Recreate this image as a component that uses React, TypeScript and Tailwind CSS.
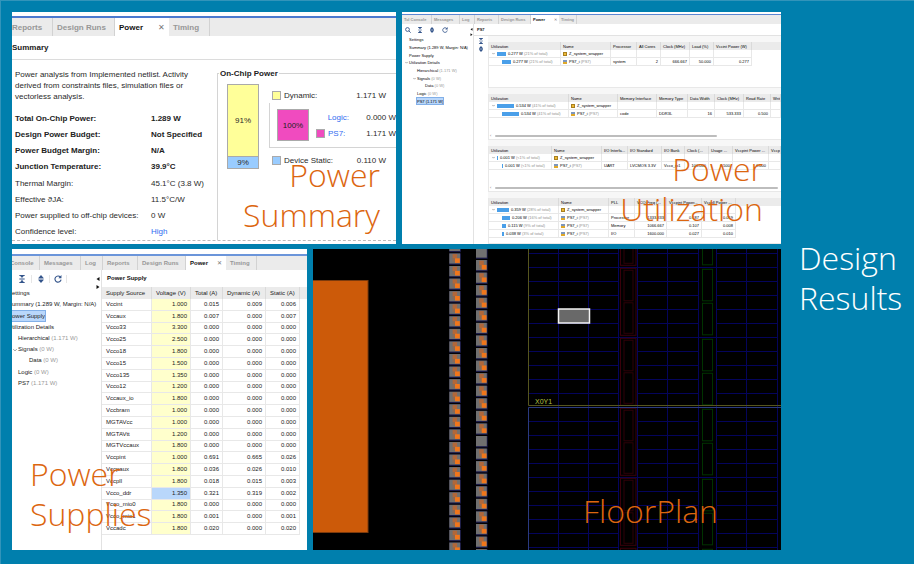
import React from "react";

const heading =
  "pointer-events-none font-['Open_Sans','Noto_Sans',sans-serif] text-[32px] leading-10 font-light text-[#dc660f]";

type IconProps = { className: string };

function CollapseIcon({ className }: IconProps) {
  return (
    <svg viewBox="0 0 12 12" className={className} fill="#34558b" aria-hidden="true">
      <path d="M2 0h8v1.6H2zM2 10.4h8V12H2zM2 5.3h8v1.4H2zM3.4 1.6h5.2L6 4.6zM6 7.2l2.6 3.2H3.4z" />
    </svg>
  );
}

function ExpandIcon({ className }: IconProps) {
  return (
    <svg viewBox="0 0 12 12" className={className} fill="#34558b" aria-hidden="true">
      <path d="M6 0l4 4.6H2zM6 12L2 7.4h8zM2 5.1h8v1.8H2z" />
    </svg>
  );
}

function RefreshIcon({ className }: IconProps) {
  return (
    <svg viewBox="0 0 12 12" className={className} aria-hidden="true">
      <path d="M9.6 3.2A4.6 4.6 0 1 0 10.6 7" fill="none" stroke="#34558b" strokeWidth="1.7" />
      <path d="M11.2 0v4.8H6.6z" fill="#34558b" />
    </svg>
  );
}

function SearchIcon({ className }: IconProps) {
  return (
    <svg viewBox="0 0 12 12" className={className} fill="none" stroke="#34558b" strokeWidth="1.8" aria-hidden="true">
      <circle cx="5" cy="5" r="3.8" />
      <path d="M7.8 7.8l3.6 3.6" />
    </svg>
  );
}

function Chevron({ className }: IconProps) {
  return (
    <svg viewBox="0 0 6 6" className={className} fill="none" stroke="#777" strokeWidth="1.2" aria-hidden="true">
      <path d="M.5 1.8L3 4.3l2.500-2.500" />
    </svg>
  );
}

function SplitterArrows({ className }: IconProps) {
  return (
    <svg viewBox="0 0 4 12" className={className} aria-hidden="true">
      <path d="M3.500 0v4L.5 2zM.5 8v4l3-2z" fill="#111" />
    </svg>
  );
}

type TabItem = { label: string; width: string; active?: boolean };

function TabBar({ tabs, pad }: { tabs: TabItem[]; pad: string }) {
  return (
    <div role="tablist" className="flex h-full overflow-hidden bg-[#ebebeb] font-bold text-[#979797]">
      {tabs.map((t) =>
        t.active ? (
          <div key={t.label} className={`flex shrink-0 items-center justify-between bg-white text-[#111] ${pad} ${t.width}`}>
            <button role="tab" aria-selected="true">{t.label}</button>
            <button aria-label="Close Power" className="font-normal text-[#777]">✕</button>
          </div>
        ) : (
          <button
            key={t.label}
            role="tab"
            aria-selected="false"
            className={`shrink-0 overflow-hidden border-r border-[#d2d2d2] text-left whitespace-nowrap ${pad} ${t.width}`}
          >
            {t.label}
          </button>
        ),
      )}
    </div>
  );
}

/* ---------------------------- Power summary ---------------------------- */

const summaryTabs: TabItem[] = [
  { label: "Reports", width: "w-[45px] -ml-1" },
  { label: "Design Runs", width: "w-[62px]" },
  { label: "Power", width: "w-[54px]", active: true },
  { label: "Timing", width: "w-[41px]" },
];

const summaryRows = [
  { label: "Total On-Chip Power:", value: "1.289 W", bold: true },
  { label: "Design Power Budget:", value: "Not Specified", bold: true },
  { label: "Power Budget Margin:", value: "N/A", bold: true },
  { label: "Junction Temperature:", value: "39.9°C", bold: true },
  { label: "Thermal Margin:", value: "45.1°C (3.8 W)" },
  { label: "Effective ϑJA:", value: "11.5°C/W" },
  { label: "Power supplied to off-chip devices:", value: "0 W" },
  { label: "Confidence level:", value: "High", link: true },
];

function PowerSummary() {
  return (
    <section className="relative flex min-w-0 flex-col overflow-hidden bg-white text-[8px] leading-[11px] text-[#2a2a2a]">
      <div className="mt-1 h-[2px] shrink-0 bg-[#4b79cf]" />
      <div className="h-[18px] shrink-0">
        <TabBar tabs={summaryTabs} pad="px-1" />
      </div>
      <h2 className="flex h-6 shrink-0 items-center border-b border-[#dcdcdc] font-bold text-[#222]">Summary</h2>
      <div className="mb-[3px] flex min-h-0 flex-1 border-b border-dashed border-[#bbb]">
        <div className="flex w-[205px] shrink-0 flex-col pt-[9px] pl-[3px]">
          <p className="w-[196px] whitespace-nowrap">
            Power analysis from Implemented netlist. Activity
            <br />
            derived from constraints files, simulation files or
            <br />
            vectorless analysis.
          </p>
          <dl className="mt-2 grid flex-1 auto-rows-fr">
            {summaryRows.map((r) => (
              <div key={r.label} className={`flex items-center whitespace-nowrap ${r.bold ? "font-bold text-[#222]" : ""}`}>
                <dt className="w-[136px] shrink-0">{r.label}</dt>
                <dd>{r.link ? <a href="#confidence" className="text-[#2f6bf0]">{r.value}</a> : r.value}</dd>
              </div>
            ))}
          </dl>
        </div>
        <fieldset className="mt-2 min-w-0 flex-1 border-t border-l border-[#d4d4d4] pl-[9px]">
          <legend className="-ml-[8px] px-px font-bold text-[#222]">On-Chip Power</legend>
          <div className="mt-[5px] flex">
            <div className="flex h-[85px] w-8 shrink-0 flex-col border border-[#aaa] text-center">
              <div className="flex flex-1 items-center justify-center bg-[#ffff99]">91%</div>
              <div className="border-t border-[#aaa] bg-[#99ccff]">9%</div>
            </div>
            <div className="ml-[10px] min-w-0 flex-1">
              <div className="mt-[5px] flex h-3 items-center pl-[3px]">
                <span className="mr-[3px] size-[9px] border border-[#aaa] bg-[#ffff99]" />
                <span>Dynamic:</span>
                <span className="mr-[10px] ml-auto">1.171 W</span>
              </div>
              <div className="mt-[2px] flex h-[45px] border-b border-l border-[#d4d4d4] pt-[6px] pl-[7px]">
                <div className="flex size-8 shrink-0 items-center justify-center border border-[#aaa] bg-[#f04bbf] text-[#222]">
                  100%
                </div>
                <div className="flex-1">
                  <div className="flex h-4 items-center">
                    <a href="#logic" className="w-10 text-right text-[#2f6bf0]">Logic:</a>
                    <span className="ml-auto">0.000 W</span>
                  </div>
                  <div className="flex h-4 items-center">
                    <span className="ml-[7px] size-[9px] border border-[#aaa] bg-[#f04bbf]" />
                    <a href="#ps7" className="ml-[3px] text-[#2f6bf0]">PS7:</a>
                    <span className="ml-auto">1.171 W</span>
                  </div>
                </div>
              </div>
              <div className="mt-[6px] flex h-3 items-center pl-[3px]">
                <span className="mr-[3px] size-[9px] border border-[#aaa] bg-[#99ccff]" />
                <span>Device Static:</span>
                <span className="mr-[10px] ml-auto">0.110 W</span>
              </div>
            </div>
          </div>
        </fieldset>
      </div>
      <h1 className={`absolute right-4 bottom-[9px] text-right ${heading}`}>
        Power
        <br />
        Summary
      </h1>
    </section>
  );
}

/* -------------------------- Navigation tree --------------------------- */

type TreeItem = { label: string; note?: string; level: number; open?: boolean };

const treeItems: TreeItem[] = [
  { label: "Settings", level: 0 },
  { label: "Summary (1.289 W, Margin: N/A)", level: 0 },
  { label: "Power Supply", level: 0 },
  { label: "Utilization Details", level: 0, open: true },
  { label: "Hierarchical", note: "(1.171 W)", level: 1 },
  { label: "Signals", note: "(0 W)", level: 1, open: true },
  { label: "Data", note: "(0 W)", level: 2 },
  { label: "Logic", note: "(0 W)", level: 1 },
  { label: "PS7", note: "(1.171 W)", level: 1 },
];

function Tree({ selected, indents, chevron }: { selected: string; indents: string[]; chevron: string }) {
  return (
    <ul className="grid h-full auto-rows-fr">
      {treeItems.map((item) => (
        <li key={item.label} className={`flex items-center whitespace-nowrap ${indents[item.level]}`}>
          <span className="flex w-0 justify-end">{item.open && <Chevron className={chevron} />}</span>
          <button
            className={
              item.label === selected
                ? "h-full bg-[#b9d7fb] px-px outline-1 -outline-offset-1 outline-[#82b0e8]"
                : "h-full px-px"
            }
          >
            {item.label} {item.note && <span className={item.label === selected ? "" : "text-[#999]"}>{item.note}</span>}
          </button>
        </li>
      ))}
    </ul>
  );
}

/* -------------------------- Power utilization -------------------------- */

const utilizationTabs: TabItem[] = [
  { label: "Tcl Console", width: "w-[30px]" },
  { label: "Messages", width: "w-[28px]" },
  { label: "Log", width: "w-[15px]" },
  { label: "Reports", width: "w-6" },
  { label: "Design Runs", width: "w-8" },
  { label: "Power", width: "w-7", active: true },
  { label: "Timing", width: "w-[18px]" },
];

type UsageRow = { bar: string; watts: string; share: string; name: string; note?: string; cells: string[] };
type UsageTableData = { id: string; widths: string[]; heads: string[]; rows: UsageRow[]; scroll?: string };

const usageTables: UsageTableData[] = [
  {
    id: "Processor",
    widths: ["w-[72px]", "w-[50px]", "w-[26px]", "w-6", "w-[29px]", "w-6", "w-[38px]"],
    heads: ["Processor", "All Cores", "Clock (MHz)", "Load (%)", "Vccint Power (W)"],
    rows: [
      { bar: "w-[9px]", watts: "0.277 W", share: "(21% of total)", name: "Z_system_wrapper", cells: ["", "", "", "", ""] },
      { bar: "w-[9px]", watts: "0.277 W", share: "(21% of total)", name: "PS7_i", note: "(PS7)", cells: ["system", "2", "666.667", "50.000", "0.277"] },
    ],
  },
  {
    id: "Memory",
    widths: ["w-20", "w-[49px]", "w-[39px]", "w-[31px]", "w-[27px]", "w-[29px]", "w-[27px]"],
    heads: ["Memory Interface", "Memory Type", "Data Width", "Clock (MHz)", "Read Rate", "Write Rate"],
    rows: [
      { bar: "w-[17px]", watts: "0.534 W", share: "(41% of total)", name: "Z_system_wrapper", cells: ["", "", "", "", "", ""] },
      { bar: "w-[17px]", watts: "0.534 W", share: "(41% of total)", name: "PS7_i", note: "(PS7)", cells: ["code", "DDR3L", "16", "533.333", "0.500", ""] },
    ],
    scroll: "mr-[64px]",
  },
  {
    id: "I/O",
    widths: ["w-[63px]", "w-[50px]", "w-[26px]", "w-[34px]", "w-[23px]", "w-6", "w-6", "w-9"],
    heads: ["I/O Interfa...", "I/O Standard", "I/O Bank", "Clock (...", "Usage ...", "Vccpint Power ...", "Vccpaux"],
    rows: [
      { bar: "w-px", watts: "0.001 W", share: "(<1% of total)", name: "Z_system_wrapper", cells: ["", "", "", "", "", "", ""] },
      { bar: "w-px", watts: "0.001 W", share: "(<1% of total)", name: "PS7_i", note: "(PS7)", cells: ["UART", "LVCMOS 3.3V", "Vcco_io1", "100.000", "0.500", "0.000", ""] },
    ],
    scroll: "mr-[3px]",
  },
  {
    id: "PLL",
    widths: ["w-[70px]", "w-[50px]", "w-[26px]", "w-8", "w-[35px]", "w-[34px]"],
    heads: ["PLL", "VCO Freq (...", "Vccpint Power...", "Vccpll Power ..."],
    rows: [
      { bar: "w-3", watts: "0.359 W", share: "(28% of total)", name: "Z_system_wrapper", cells: ["", "", "", ""] },
      { bar: "w-2", watts: "0.206 W", share: "(16% of total)", name: "PS7_i", note: "(PS7)", cells: ["Processor", "1333.333", "0.187", "0.019"] },
      { bar: "w-1", watts: "0.115 W", share: "(9% of total)", name: "PS7_i", note: "(PS7)", cells: ["Memory", "1066.667", "0.107", "0.008"] },
      { bar: "w-[2px]", watts: "0.038 W", share: "(3% of total)", name: "PS7_i", note: "(PS7)", cells: ["I/O", "1600.000", "0.027", "0.010"] },
    ],
  },
];

function UsageTable({ table }: { table: UsageTableData }) {
  const cell = "h-2 overflow-hidden border-r border-b border-[#e8e8e8] px-[2px] whitespace-nowrap";
  return (
    <div className="flex h-[46px] shrink-0 flex-col overflow-hidden border-b border-l border-[#e8e8e8] bg-white">
      <table aria-label={table.id} className="w-full table-fixed border-separate border-spacing-0">
        <colgroup>
          {table.widths.map((w, i) => (
            <col key={i} className={w} />
          ))}
          <col />
        </colgroup>
        <thead>
          <tr>
            {["Utilization", "Name", ...table.heads].map((h) => (
              <th key={h} scope="col" className="h-2 overflow-hidden border-r border-[#dadada] bg-[#ebebeb] px-[2px] text-left font-normal whitespace-nowrap">
                {h}
              </th>
            ))}
            {table.widths.length === table.heads.length + 2 && <td className="bg-[#ebebeb]" />}
          </tr>
        </thead>
        <tbody>
          {table.rows.map((r, i) => (
            <tr key={i}>
              <td className={cell}>
                <span className="flex items-center">
                  {i === 0 ? <Chevron className="mx-px mr-[2px] size-[3px] shrink-0" /> : <span className="w-[11px] shrink-0" />}
                  <span className={`mr-[2px] h-1 shrink-0 bg-[#4a9fe9] ${r.bar}`} />
                  {r.watts}
                  <span className="ml-px text-[#8f8f8f]">{r.share}</span>
                </span>
              </td>
              <td className={cell}>
                <span className="flex items-center">
                  <span
                    className={
                      r.note
                        ? "mr-[2px] size-1 shrink-0 border-b-2 border-[#e0a92a] bg-[#7d97bd]"
                        : "mr-[2px] size-1 shrink-0 border border-[#a87f1f] bg-[#f0bb35]"
                    }
                  />
                  {r.name}
                  <span className="ml-px text-[#8f8f8f]">{r.note}</span>
                </span>
              </td>
              {r.cells.map((c, j) => (
                <td key={j} className={`${cell} ${/^[\d.]+$/.test(c) ? "text-right" : ""}`}>
                  {c}
                </td>
              ))}
            </tr>
          ))}
        </tbody>
      </table>
      {table.scroll && (
        <div className="mt-auto flex items-center">
          <span className="w-[6px] pl-px text-[#777]">‹</span>
          <span className={`h-[2px] flex-1 rounded-full bg-[#bdbdbd] ${table.scroll}`} />
        </div>
      )}
    </div>
  );
}

function PowerUtilization() {
  return (
    <section className="relative flex min-w-0 flex-col overflow-hidden bg-white text-[4px] leading-[7px] text-black">
      <div className="mt-[2px] h-px shrink-0 bg-[#5b86d2]" />
      <div className="h-[9px] shrink-0">
        <TabBar tabs={utilizationTabs} pad="px-[2px]" />
      </div>
      <div className="flex min-h-0 flex-1">
        <div className="flex w-[72px] shrink-0 flex-col border-r border-[#e2e2e2]">
          <div className="flex h-3 shrink-0 items-center justify-between pl-[3px]">
            <button aria-label="Search"><SearchIcon className="size-[6px]" /></button>
            <button aria-label="Collapse all"><CollapseIcon className="size-[6px]" /></button>
            <button aria-label="Expand all"><ExpandIcon className="size-[6px]" /></button>
            <button aria-label="Refresh"><RefreshIcon className="size-[6px]" /></button>
            <span className="w-[10px]" />
            <SplitterArrows className="mt-1 h-2 w-[3px]" />
          </div>
          <div className="h-[69px] shrink-0">
            <Tree selected="PS7" indents={["pl-[6px]", "pl-[14px]", "pl-[22px]"]} chevron="size-[3px] shrink-0" />
          </div>
        </div>
        <div className="flex min-w-0 flex-1 flex-col">
          <h2 className="flex h-3 shrink-0 items-center border-b border-[#e2e2e2] pl-[3px] font-bold text-[#111]">PS7</h2>
          <div className="flex min-h-0 flex-1">
            <div className="flex w-[14px] shrink-0 flex-col items-center gap-[2px] pt-[2px]">
              <button aria-label="Collapse rows"><CollapseIcon className="size-[6px]" /></button>
              <button aria-label="Expand rows"><ExpandIcon className="size-[6px]" /></button>
            </div>
            <div className="flex min-w-0 flex-1 flex-col gap-[6px] bg-[#f7f7f7] pt-[6px]">
              {usageTables.map((t) => (
                <UsageTable key={t.id} table={t} />
              ))}
            </div>
          </div>
        </div>
      </div>
      <h1 className={`absolute right-[18px] bottom-[15px] text-right ${heading}`}>
        Power
        <br />
        Utilization
      </h1>
    </section>
  );
}

/* --------------------------- Power supplies ---------------------------- */

const supplyTabs: TabItem[] = [
  { label: "Tcl Console", width: "w-[44px] -ml-4" },
  { label: "Messages", width: "w-[41px]" },
  { label: "Log", width: "w-[22px]" },
  { label: "Reports", width: "w-[35px]" },
  { label: "Design Runs", width: "w-12" },
  { label: "Power", width: "w-10", active: true },
  { label: "Timing", width: "w-[31px]" },
];

const supplies: [string, string, string, string, string][] = [
  ["Vccint", "1.000", "0.015", "0.009", "0.006"],
  ["Vccaux", "1.800", "0.007", "0.000", "0.007"],
  ["Vcco33", "3.300", "0.000", "0.000", "0.000"],
  ["Vcco25", "2.500", "0.000", "0.000", "0.000"],
  ["Vcco18", "1.800", "0.000", "0.000", "0.000"],
  ["Vcco15", "1.500", "0.000", "0.000", "0.000"],
  ["Vcco135", "1.350", "0.000", "0.000", "0.000"],
  ["Vcco12", "1.200", "0.000", "0.000", "0.000"],
  ["Vccaux_io", "1.800", "0.000", "0.000", "0.000"],
  ["Vccbram", "1.000", "0.000", "0.000", "0.000"],
  ["MGTAVcc", "1.000", "0.000", "0.000", "0.000"],
  ["MGTAVtt", "1.200", "0.000", "0.000", "0.000"],
  ["MGTVccaux", "1.800", "0.000", "0.000", "0.000"],
  ["Vccpint", "1.000", "0.691", "0.665", "0.026"],
  ["Vccpaux", "1.800", "0.036", "0.026", "0.010"],
  ["Vccpll", "1.800", "0.018", "0.015", "0.003"],
  ["Vcco_ddr", "1.350", "0.321", "0.319", "0.002"],
  ["Vcco_mio0", "1.800", "0.000", "0.000", "0.000"],
  ["Vcco_mio1", "1.800", "0.001", "0.000", "0.001"],
  ["Vccadc", "1.800", "0.020", "0.000", "0.020"],
];

function PowerSupplies() {
  return (
    <section className="relative flex min-w-0 flex-col overflow-hidden bg-white text-[6px] leading-[9px] text-[#222]">
      <div className="mt-[5px] h-[2px] shrink-0 bg-[#6b95da]" />
      <div className="h-[14px] shrink-0">
        <TabBar tabs={supplyTabs} pad="px-1" />
      </div>
      <div className="flex min-h-0 flex-1">
        <div className="w-[90px] shrink-0 border-r border-[#e2e2e2]">
          <div className="flex h-[17px] items-center">
            <button aria-label="Collapse all" className="flex w-5 justify-center border-r border-[#e6e6e6]"><CollapseIcon className="size-2" /></button>
            <button aria-label="Expand all" className="flex w-[18px] justify-center border-r border-[#e6e6e6]"><ExpandIcon className="size-2" /></button>
            <button aria-label="Refresh" className="flex w-[17px] justify-center border-r border-[#e6e6e6]"><RefreshIcon className="size-2" /></button>
            <SplitterArrows className="mt-2 mr-px ml-auto h-3 w-1" />
          </div>
          <div className="-ml-[5px] h-[102px] pt-px">
            <Tree selected="Power Supply" indents={["", "pl-[10px]", "pl-[21px]"]} chevron="size-1 shrink-0" />
          </div>
        </div>
        <div className="min-w-0 flex-1">
          <h2 className="flex h-[17px] items-center pl-[5px] font-bold text-[#111]">Power Supply</h2>
          <table className="h-[248px] w-full table-fixed border-separate border-spacing-0">
            <colgroup>
              <col className="w-[50px]" />
              <col className="w-[39px]" />
              <col className="w-8" />
              <col className="w-[43px]" />
              <col className="w-[34px]" />
              <col />
            </colgroup>
            <thead>
              <tr>
                {["Supply Source", "Voltage (V)", "Total (A)", "Dynamic (A)", "Static (A)"].map((h) => (
                  <th key={h} scope="col" className="h-3 border-r border-[#dadada] bg-[#ebebeb] pl-1 text-left font-normal whitespace-nowrap">
                    {h}
                  </th>
                ))}
                <td className="bg-[#ebebeb]" />
              </tr>
            </thead>
            <tbody>
              {supplies.map(([name, ...values]) => (
                <tr key={name}>
                  <th scope="row" className="border-r border-b border-[#e8e8e8] pl-1 text-left font-normal">{name}</th>
                  {values.map((v, i) => (
                    <td
                      key={i}
                      className={`border-r border-b border-[#e8e8e8] pr-[3px] text-right ${
                        i === 0 ? (name === "Vcco_ddr" ? "bg-[#b9d7fb]" : "bg-[#ffffcc]") : ""
                      }`}
                    >
                      {v}
                    </td>
                  ))}
                </tr>
              ))}
            </tbody>
          </table>
        </div>
      </div>
      <h1 className={`absolute bottom-4 left-[18px] ${heading}`}>
        Power
        <br />
        Supplies
      </h1>
    </section>
  );
}

/* ------------------------------ Floorplan ------------------------------ */

const tiles = Array.from({ length: 25 }, (_, i) => i - 1);
const gridRows = [4, 18, 32, 46, 60, 74, 88, 102, 116, 130, 144, 172, 186, 200, 214, 228, 242, 256, 270, 284, 298];
const blockTops = [-50.7, 19.3, 89.3, 159.3, 229.3, 299.3];

function Tile({ x, y, empty }: { x: number; y: number; empty?: boolean }) {
  return (
    <g>
      <rect x={x} y={y} width="11.600" height="11.400" fill="#19194a" />
      <rect x={x} y={y} width="10.800" height="10.200" fill="#707070" />
      {!empty && (
        <>
          <rect x={x + 3.3} y={y + 0.7} width="4.500" height="4.500" fill="#b0673a" />
          <rect x={x + 3.3} y={y + 5.2} width="2.500" height="3" fill="#8a6a55" />
          <rect x={x + 5.7} y={y + 4.9} width="4.800" height="4.600" fill="#f1761b" />
        </>
      )}
    </g>
  );
}

function FloorPlan() {
  return (
    <section className="relative min-w-0 overflow-hidden bg-black">
      <svg viewBox="0 0 468 301" preserveAspectRatio="xMinYMin slice" className="absolute size-full" role="img" aria-label="Device floorplan">
        <rect x="-2" y="31.500" width="57" height="252" fill="#cc5a09" stroke="#7c3a0c" />
        {tiles.map((i) => (
          <React.Fragment key={i}>
            <Tile x={136.3} y={4.4 + 12.57 * i} empty={i === -1} />
            <Tile x={163} y={11 + 12.57 * i} empty={i === -1 || i === 14} />
          </React.Fragment>
        ))}
        <g stroke="#04045c" strokeWidth="1">
          {gridRows.map((y) => (
            <path key={y} d={`M216 ${y + 0.5}H306M324.500 ${y + 0.5}H386M404 ${y + 0.5}H465`} />
          ))}
          {[18.5, 88.5, 228.5].map((y) => (
            <path key={y} d={`M306 ${y}H324M386 ${y}H404`} />
          ))}
          {[245.5, 275.5, 305.5, 324.5, 354.5, 385.5, 403.5, 433.5, 464.5].map((x) => (
            <path key={x} d={`M${x} 0V301`} />
          ))}
        </g>
        <g fill="none" stroke="#2e0008" strokeWidth="1">
          {blockTops.map((y) => (
            <React.Fragment key={y}>
              <rect x="307.500" y={y} width="15.500" height="67" stroke="#3a000a" />
              <rect x="311" y={y + 2} width="9" height="30.500" />
              <rect x="311" y={y + 34.5} width="9" height="30.500" />
            </React.Fragment>
          ))}
        </g>
        <g fill="none" stroke="#003200" strokeWidth="1">
          {blockTops.map((y) => (
            <React.Fragment key={y}>
              <rect x="389.500" y={y + 1} width="10" height="31.500" />
              <rect x="389.500" y={y + 35} width="10" height="31.500" />
            </React.Fragment>
          ))}
        </g>
        <path d="M215.500 0V156.500H468" fill="none" stroke="#55551f" />
        <path d="M215.500 301V158.500H468" fill="none" stroke="#2a3a80" />
        <rect x="245.500" y="60" width="31" height="14" fill="#696969" stroke="#f4f4f4" strokeWidth="1.500" />
        <text x="222" y="155" className="fill-[#b4c043] font-['Liberation_Sans',Arial,sans-serif] text-[7px]">
          X0Y1
        </text>
      </svg>
      <h1 className={`absolute right-[63px] bottom-[19px] ${heading}`}>FloorPlan</h1>
    </section>
  );
}

export default function App() {
  return (
    <div className="flex min-h-screen border-t border-l border-[#3294ba] bg-[#007fad] font-['Liberation_Sans',Arial,sans-serif]">
      <main className="grid min-w-0 flex-1 grid-rows-[minmax(0,232fr)_minmax(0,301fr)] gap-[5px] pt-[11px] pb-[14px] pl-[11px]">
        <div className="grid min-h-0 grid-cols-[minmax(0,384fr)_minmax(0,379fr)] gap-[6px]">
          <PowerSummary />
          <PowerUtilization />
        </div>
        <div className="grid min-h-0 grid-cols-[minmax(0,295fr)_minmax(0,468fr)] gap-[6px]">
          <PowerSupplies />
          <FloorPlan />
        </div>
      </main>
      <aside className="flex w-[133px] shrink-0 flex-col justify-center pb-[10px] pl-[18px]">
        <h1 className="font-['Open_Sans','Noto_Sans',sans-serif] text-[32px] leading-10 font-light text-white">
          Design
          <br />
          Results
        </h1>
      </aside>
    </div>
  );
}
